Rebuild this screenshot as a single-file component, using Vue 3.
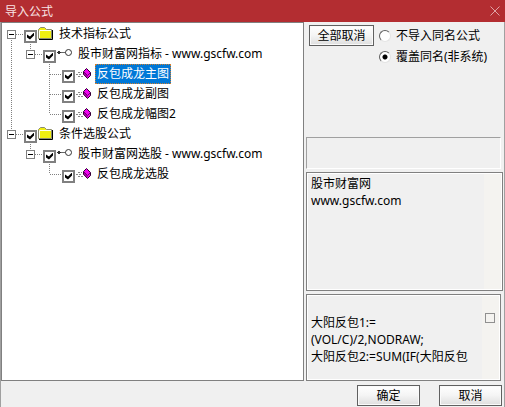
<template>
  <div class="dialog">
    <header class="titlebar">
      <h1>导入公式</h1>
      <button type="button" class="close-button" aria-label="关闭">
        <svg width="10" height="10" viewBox="0 0 10 10">
          <path d="M0.5 0.5 L9.5 9.5 M9.5 0.5 L0.5 9.5" stroke="#dfa3a5" fill="none" />
        </svg>
      </button>
    </header>

    <main class="content">
      <ul class="tree">
        <li v-for="node in nodes" :key="node.id" class="tree-row">
          <span v-for="(guide, i) in node.guides" :key="i" class="guide">
            <svg width="19" height="20" viewBox="0 0 19 20" shape-rendering="crispEdges">
              <g stroke="#808080" stroke-dasharray="1 1" fill="none">
                <path v-if="guide.up" d="M9.5 0 V10" />
                <path v-if="guide.down" d="M9.5 10 V20" />
                <path v-if="guide.branch" d="M10 10.5 H21" />
              </g>
              <g v-if="guide.toggle">
                <rect x="5.5" y="6.5" width="8" height="8" fill="#fff" stroke="#808080" />
                <path d="M7 10.5 H12" stroke="#000" />
              </g>
            </svg>
          </span>
          <input :id="node.id" v-model="node.checked" type="checkbox" class="check" />
          <svg v-if="node.icon === 'folder'" class="icon" width="16" height="16" viewBox="0 0 16 16">
            <path d="M0.5 12.5 V3.5 L2.5 1.5 H6.5 L8.5 3.5 H13.5 V12.5 Z" fill="#f0ee10" stroke="#8c8c70" />
            <path d="M1.5 12 V4.5 H13" fill="none" stroke="#fffff0" />
            <path d="M14.5 4 V13.5 H1" fill="none" stroke="#000" />
          </svg>
          <svg v-else-if="node.icon === 'key'" class="icon" width="16" height="16" viewBox="0 0 16 16">
            <path d="M1 5.5 H3 M0 6.5 H4 M1 7.5 H3" stroke="#333" />
            <path d="M4 6.5 H9" stroke="#666" />
            <circle cx="11.5" cy="6.5" r="3" fill="#fff" stroke="#333" />
          </svg>
          <svg v-else class="icon" width="16" height="16" viewBox="0 0 16 16">
            <path d="M2 6.5 H6 M0 8.5 H5 M2 10.5 H7" stroke="#8a8a8a" stroke-dasharray="2 1" />
            <path d="M10.5 2.5 L14.5 6.5 V9.5 L11.5 12.5 L7.5 8.5 V5.5 Z" fill="#f000f0" stroke="#300030" />
            <path d="M8 9 L11.5 12 V9.5 L8 6 Z" fill="#a000a0" />
            <path d="M8 6 L11.5 9.5 L14 7" fill="none" stroke="#700070" />
          </svg>
          <label :for="node.id" class="node-label" :class="{ selected: node.selected }">{{ node.text }}</label>
        </li>
      </ul>

      <section class="side">
        <div class="options">
          <button type="button" class="btn btn-all" @click="clearAll">全部取消</button>
          <div class="radios">
            <label><input v-model="mode" type="radio" name="mode" value="skip" />不导入同名公式</label>
            <label><input v-model="mode" type="radio" name="mode" value="cover" />覆盖同名(非系统)</label>
          </div>
        </div>
        <div class="status"></div>
        <div class="memo memo-note">
          <textarea v-model="note" aria-label="说明" readonly></textarea>
          <span class="scroll"></span>
        </div>
        <div class="memo memo-source">
          <textarea v-model="source" aria-label="源码" readonly></textarea>
          <span class="scroll"><i class="thumb"></i></span>
        </div>
      </section>
    </main>

    <footer class="actions">
      <button type="button" class="btn">确定</button>
      <button type="button" class="btn">取消</button>
    </footer>
  </div>
</template>

<script setup>
import { ref } from 'vue'

const mode = ref('cover')
const note = ref('股市财富网\nwww.gscfw.com')
const source = ref('\n大阳反包1:=\n(VOL/C)/2,NODRAW;\n大阳反包2:=SUM(IF(大阳反包')

// connector pieces for one indent cell
const line = { up: true, down: true }
const blank = {}
const tee = { up: true, down: true, branch: true }
const corner = { up: true, branch: true }

const nodes = ref([
  { id: 'n1', icon: 'folder', text: '技术指标公式', checked: true, guides: [{ down: true, branch: true, toggle: true }] },
  { id: 'n2', icon: 'key', text: '股市财富网指标 - www.gscfw.com', checked: true, guides: [line, { ...corner, toggle: true }] },
  { id: 'n3', icon: 'item', text: '反包成龙主图', checked: true, selected: true, guides: [line, blank, tee] },
  { id: 'n4', icon: 'item', text: '反包成龙副图', checked: true, guides: [line, blank, tee] },
  { id: 'n5', icon: 'item', text: '反包成龙幅图2', checked: true, guides: [line, blank, corner] },
  { id: 'n6', icon: 'folder', text: '条件选股公式', checked: true, guides: [{ ...corner, toggle: true }] },
  { id: 'n7', icon: 'key', text: '股市财富网选股 - www.gscfw.com', checked: true, guides: [blank, { ...corner, toggle: true }] },
  { id: 'n8', icon: 'item', text: '反包成龙选股', checked: true, guides: [blank, blank, corner] }
])

function clearAll() {
  nodes.value.forEach((node) => {
    node.checked = false
  })
}
</script>

<style>
body {
  margin: 0;
  background: #f0f0f0;
}
</style>

<style scoped>
.dialog {
  display: flex;
  flex-direction: column;
  box-sizing: border-box;
  min-height: 100vh;
  background: #f0f0f0;
  color: #000;
  font-family: "Noto Sans", "Noto Sans CJK SC", sans-serif;
  font-size: 12px;
  line-height: 17px;
}

.titlebar {
  display: flex;
  align-items: center;
  justify-content: space-between;
  height: 22px;
  padding: 0 5px;
  background: #b32d31;
}

.titlebar h1 {
  margin: 0;
  font-size: 12px;
  font-weight: normal;
  color: #f8e4e4;
}

.close-button {
  display: flex;
  padding: 0;
  border: none;
  background: none;
}

.content {
  flex: 1;
  display: grid;
  grid-template-columns: 1fr 198px;
  gap: 2px;
  border: solid #a0a0a0;
  border-width: 0 1px;
}

/* tree */
.tree {
  margin: 0;
  padding: 1px 0 0;
  list-style: none;
  background: #fff;
  border: 1px solid #808080;
}

.tree-row {
  display: flex;
  align-items: center;
  height: 20px;
}

.guide {
  width: 19px;
  height: 20px;
}

.guide svg {
  display: block;
  overflow: visible;
}

.check {
  appearance: none;
  box-sizing: border-box;
  display: grid;
  place-content: center;
  width: 13px;
  height: 13px;
  margin: 4px 1px 0 3px;
  border: 2px solid #808080;
  background: #fff;
}

.check:checked::after {
  content: "";
  width: 7px;
  height: 7px;
  background: #000;
  clip-path: polygon(0 2px, 3px 4px, 7px 0, 7px 3px, 3px 7px, 0 5px);
}

.icon {
  margin-right: 3px;
}

.node-label {
  padding: 0 1px;
  line-height: 18px;
  border: 1px solid transparent;
  white-space: nowrap;
}

.node-label.selected {
  background: #0078d7;
  color: #fff;
  border: 1px dotted #d08030;
}

/* right column */
.side {
  display: flex;
  flex-direction: column;
  gap: 3px;
}

.options {
  flex: 1;
  display: flex;
  align-items: flex-start;
  gap: 5px;
  padding: 3px;
}

.radios label {
  display: flex;
  align-items: center;
  gap: 5px;
  height: 21px;
  white-space: nowrap;
}

.radios input {
  appearance: none;
  box-sizing: border-box;
  width: 12px;
  height: 12px;
  margin: 0;
  border: 1px solid;
  border-color: #606060 #e4e4e4 #e4e4e4 #606060;
  border-radius: 50%;
  background: #fff;
}

.radios input:checked {
  background: radial-gradient(circle, #000 2px, #fff 3px);
}

.status {
  height: 30px;
  margin-right: 3px;
  border: 1px solid;
  border-color: #a0a0a0 #fff #fff #a0a0a0;
}

.memo {
  display: flex;
  box-sizing: border-box;
  border: 1px solid #808080;
  padding: 1px;
  background: #f0f0f0;
  box-shadow: inset 0 0 0 1px #fff;
}

.memo-note {
  height: 119px;
  margin-right: 1px;
}

.memo-source {
  height: 87px;
  margin-right: 3px;
}

.memo textarea {
  flex: 1;
  min-width: 0;
  margin: 0;
  padding: 1px 3px;
  border: none;
  outline: none;
  resize: none;
  overflow: hidden;
  background: transparent;
  color: inherit;
  font: inherit;
  white-space: pre;
}

.scroll {
  width: 17px;
  background: #f4f3f0;
}

.thumb {
  display: block;
  width: 8px;
  height: 8px;
  margin: 17px 3px;
  border: 1px solid #909090;
}

.btn {
  box-sizing: border-box;
  width: 63px;
  height: 21px;
  padding: 0;
  border: 1px solid #606060;
  background: linear-gradient(#fff, #f4f4f4 50%, #dedede);
  box-shadow: inset 0 0 0 1px #fafafa;
  color: #000;
  font: inherit;
}

.btn-all {
  width: 65px;
}

.actions {
  display: flex;
  justify-content: flex-end;
  gap: 19px;
  padding: 4px 2px 1px;
  border: solid #a0a0a0;
  border-width: 0 1px;
}
</style>
